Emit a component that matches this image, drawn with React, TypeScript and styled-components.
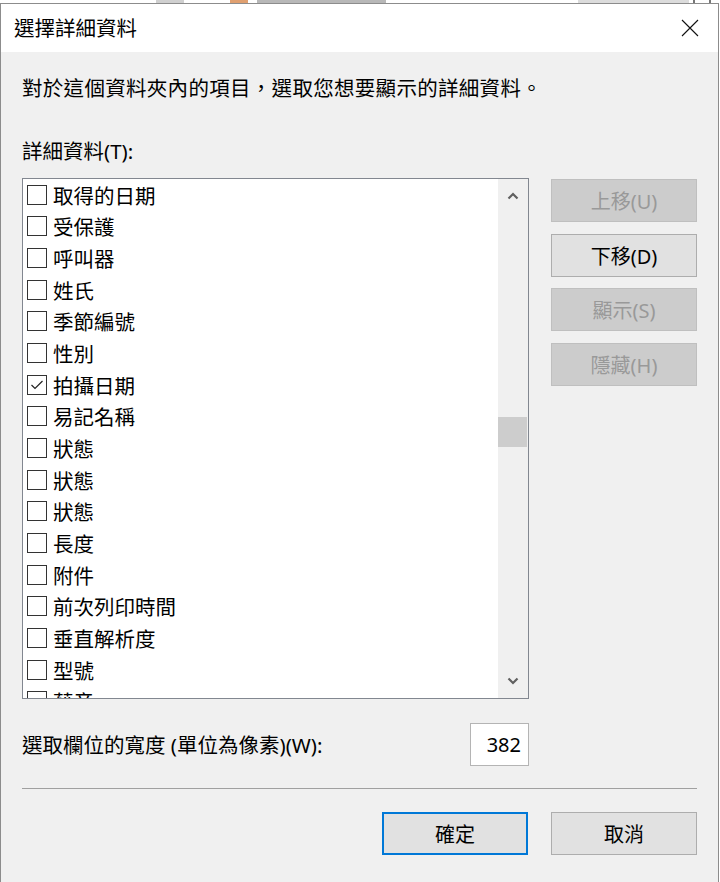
import React from 'react'
import styled, { createGlobalStyle } from 'styled-components'

const FONT = `"Noto Sans", "Noto Sans CJK TC", sans-serif`

const GlobalStyle = createGlobalStyle`
  html, body {
    margin: 0;
    padding: 0;
    background: #ffffff;
    font-family: ${FONT};
  }
  * { box-sizing: border-box; }
`

const BehindStrip = styled.div({
    height: 3,
    display: 'flex',
    flexDirection: 'row',
    alignItems: 'stretch',
    background: '#ffffff',
    overflow: 'hidden'
})

const StripBit = styled.div<{ $w: number, $ml: number, $c: string }>(({ $w, $ml, $c }) => ({
    width: $w,
    marginLeft: $ml,
    background: $c
}))

const Window = styled.div({
    width: 719,
    height: 879,
    display: 'flex',
    flexDirection: 'column',
    borderTop: '1px solid #8c8c8c',
    borderLeft: '1px solid #8c8c8c',
    borderRight: '1px solid #8c8c8c'
})

const TitleBar = styled.div({
    height: 48,
    flexShrink: 0,
    display: 'flex',
    flexDirection: 'row',
    alignItems: 'center',
    justifyContent: 'space-between',
    paddingLeft: 13,
    paddingRight: 19,
    background: '#ffffff'
})

const Title = styled.span({
    fontSize: 20.5,
    lineHeight: '28px',
    color: '#000'
})

const Body = styled.div({
    flex: 1,
    display: 'flex',
    flexDirection: 'column',
    background: '#f0f0f0',
    paddingLeft: 21,
    paddingRight: 21
})

const Text = styled.div<{ $mt: number, $ls?: number }>(({ $mt, $ls }) => ({
    marginTop: $mt,
    fontSize: 20.5,
    lineHeight: '28px',
    letterSpacing: $ls ?? 0,
    color: '#000',
    whiteSpace: 'nowrap'
}))

const Main = styled.div({
    marginTop: 13,
    display: 'flex',
    flexDirection: 'row',
    alignItems: 'flex-start',
    gap: 22
})

const ListBox = styled.div({
    width: 507,
    height: 521,
    display: 'flex',
    flexDirection: 'row',
    border: '1px solid #828790',
    background: '#ffffff'
})

const Items = styled.div({
    flex: 1,
    overflow: 'hidden'
})

const Row = styled.div({
    height: 31.67,
    display: 'flex',
    flexDirection: 'row',
    alignItems: 'center',
    paddingLeft: 4,
    gap: 6,
    fontSize: 20.5,
    color: '#000',
    whiteSpace: 'nowrap'
})

const Box = styled.div({
    width: 20,
    height: 20,
    flexShrink: 0,
    border: '1px solid #333333',
    background: '#ffffff',
    display: 'flex',
    alignItems: 'center',
    justifyContent: 'center'
})

const ScrollBar = styled.div({
    width: 30,
    display: 'flex',
    flexDirection: 'column',
    background: '#f0f0f0'
})

const ScrollButton = styled.div({
    height: 34,
    display: 'flex',
    alignItems: 'center',
    justifyContent: 'center'
})

const Track = styled.div({
    flex: 1
})

const Thumb = styled.div<{ $top: number }>(({ $top }) => ({
    marginTop: $top,
    width: 29,
    height: 30,
    background: '#cdcdcd'
}))

const SideButtons = styled.div({
    marginTop: 1,
    display: 'flex',
    flexDirection: 'column',
    gap: 11.5
})

const Button = styled.div<{ $disabled?: boolean, $default?: boolean }>(({ $disabled, $default }) => ({
    width: 146,
    height: 43,
    display: 'flex',
    alignItems: 'center',
    justifyContent: 'center',
    fontSize: 20,
    color: $disabled ? '#999999' : '#000',
    background: $disabled ? '#cccccc' : '#e1e1e1',
    border: $default ? '2px solid #0078d7' : $disabled ? '1px solid #bfbfbf' : '1px solid #adadad'
}))

const WidthRow = styled.div({
    marginTop: 24,
    width: 507,
    display: 'flex',
    flexDirection: 'row',
    alignItems: 'center',
    justifyContent: 'space-between'
})

const NumberInput = styled.div({
    width: 59,
    height: 43,
    display: 'flex',
    alignItems: 'center',
    justifyContent: 'flex-end',
    paddingRight: 7,
    fontSize: 20,
    color: '#000',
    background: '#ffffff',
    border: '1px solid #b4b4b4'
})

const Separator = styled.div({
    marginTop: 22,
    width: 675,
    height: 1,
    background: '#a0a0a0'
})

const Footer = styled.div({
    marginTop: 23,
    display: 'flex',
    flexDirection: 'row',
    justifyContent: 'flex-end',
    gap: 23
})

const CloseIcon = () => (
    <svg width="18" height="18" viewBox="0 0 18 18">
        <path d="M1 1 L17 17 M17 1 L1 17" stroke="#111" strokeWidth="1.1" fill="none" />
    </svg>
)

const Chevron = ({ up }: { up: boolean }) => (
    <svg width="12" height="8" viewBox="0 0 12 8">
        <polyline
            points={up ? '1.5,6.5 6,2 10.5,6.5' : '1.5,1.5 6,6 10.5,1.5'}
            stroke="#606060"
            strokeWidth="2.2"
            fill="none"
        />
    </svg>
)

const Check = () => (
    <svg width="16" height="16" viewBox="0 0 16 16">
        <polyline points="2.5,8 6,11.5 13.5,4" stroke="#222" strokeWidth="1.2" fill="none" />
    </svg>
)

const ITEMS: { label: string, checked?: boolean }[] = [
    { label: '取得的日期' },
    { label: '受保護' },
    { label: '呼叫器' },
    { label: '姓氏' },
    { label: '季節編號' },
    { label: '性別' },
    { label: '拍攝日期', checked: true },
    { label: '易記名稱' },
    { label: '狀態' },
    { label: '狀態' },
    { label: '狀態' },
    { label: '長度' },
    { label: '附件' },
    { label: '前次列印時間' },
    { label: '垂直解析度' },
    { label: '型號' },
    { label: '藉音' }
]

const App: React.FC = () => {
    return (
        <>
            <GlobalStyle />
            <BehindStrip>
                <StripBit $w={28} $ml={156} $c="#d0d0d0" />
                <StripBit $w={18} $ml={46} $c="#e0a070" />
                <StripBit $w={129} $ml={9} $c="#b8b8b8" />
                <StripBit $w={111} $ml={192} $c="#dcdcdc" />
                <StripBit $w={2} $ml={4} $c="#777" />
                <StripBit $w={2} $ml={14} $c="#777" />
            </BehindStrip>
            <Window>
                <TitleBar>
                    <Title>選擇詳細資料</Title>
                    <CloseIcon />
                </TitleBar>
                <Body>
                    <Text $mt={22} $ls={0.3}>對於這個資料夾內的項目，選取您想要顯示的詳細資料。</Text>
                    <Text $mt={35}>詳細資料(T):</Text>
                    <Main>
                        <ListBox>
                            <Items>
                                {ITEMS.map((item, i) => (
                                    <Row key={i}>
                                        <Box>{item.checked && <Check />}</Box>
                                        {item.label}
                                    </Row>
                                ))}
                            </Items>
                            <ScrollBar>
                                <ScrollButton><Chevron up /></ScrollButton>
                                <Track>
                                    <Thumb $top={204} />
                                </Track>
                                <ScrollButton><Chevron up={false} /></ScrollButton>
                            </ScrollBar>
                        </ListBox>
                        <SideButtons>
                            <Button $disabled>上移(U)</Button>
                            <Button>下移(D)</Button>
                            <Button $disabled>顯示(S)</Button>
                            <Button $disabled>隱藏(H)</Button>
                        </SideButtons>
                    </Main>
                    <WidthRow>
                        <Text $mt={0}>選取欄位的寬度 (單位為像素)(W):</Text>
                        <NumberInput>382</NumberInput>
                    </WidthRow>
                    <Separator />
                    <Footer>
                        <Button $default>確定</Button>
                        <Button>取消</Button>
                    </Footer>
                </Body>
            </Window>
        </>
    )
}

export default App
